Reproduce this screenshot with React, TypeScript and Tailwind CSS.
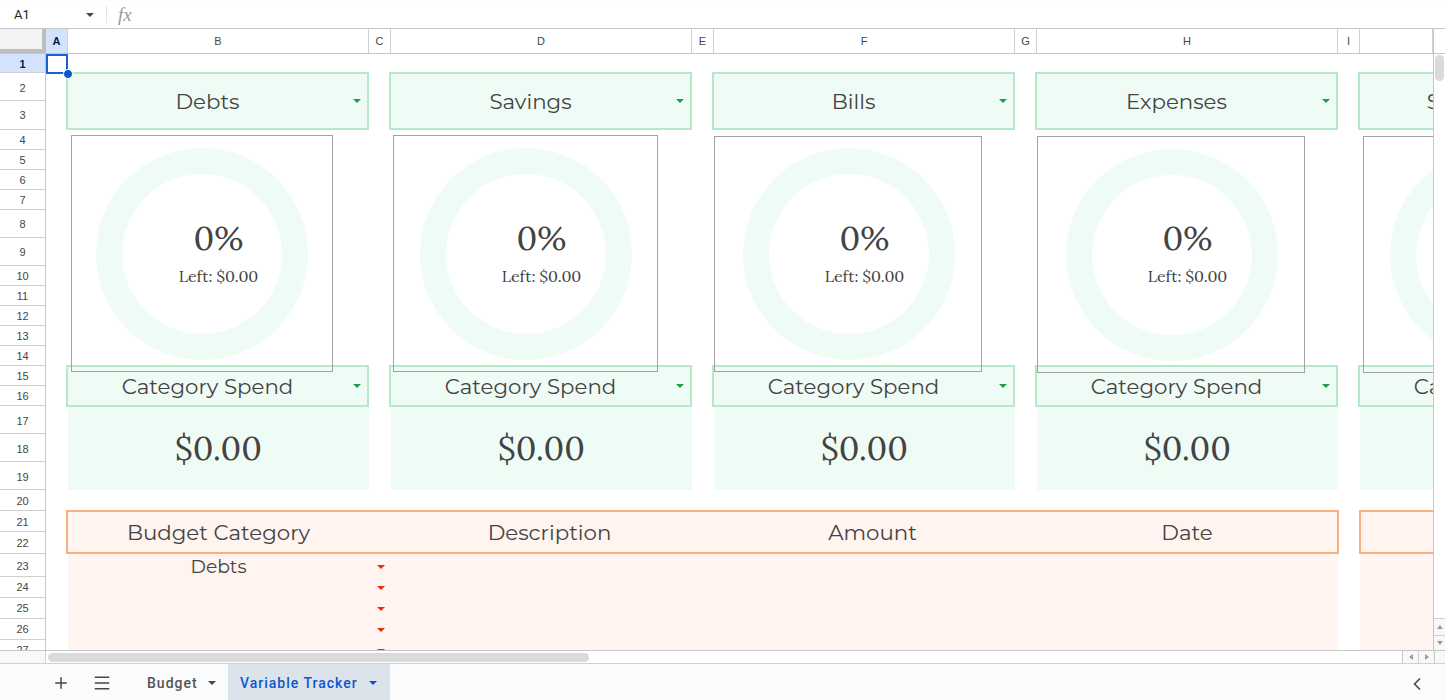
import { ChevronLeft, Menu, Plus } from 'lucide-react';

const COLUMNS: { label: string; width: string; active?: boolean }[] = [
  { label: 'A', width: 'w-[22px]', active: true },
  { label: 'B', width: 'w-[301px]' },
  { label: 'C', width: 'w-[22px]' },
  { label: 'D', width: 'w-[301px]' },
  { label: 'E', width: 'w-[22px]' },
  { label: 'F', width: 'w-[301px]' },
  { label: 'G', width: 'w-[22px]' },
  { label: 'H', width: 'w-[301px]' },
  { label: 'I', width: 'w-[22px]' },
  { label: '', width: 'w-[73px]' },
];

const ROWS: { n: number; height: string }[] = [
  { n: 1, height: 'h-[19px] pt-[2px]' },
  { n: 2, height: 'h-[28px] pt-[4px]' },
  { n: 3, height: 'h-[29px]' },
  { n: 4, height: 'h-[20px] pt-[2px]' },
  { n: 5, height: 'h-[20px] pt-[2px]' },
  { n: 6, height: 'h-[20px] pt-[2px]' },
  { n: 7, height: 'h-[20px] pt-[2px]' },
  { n: 8, height: 'h-[28px] pt-[2px]' },
  { n: 9, height: 'h-[28px] pt-[2px]' },
  { n: 10, height: 'h-[20px] pt-[2px]' },
  { n: 11, height: 'h-[20px] pt-[2px]' },
  { n: 12, height: 'h-[20px] pt-[2px]' },
  { n: 13, height: 'h-[20px] pt-[2px]' },
  { n: 14, height: 'h-[20px] pt-[2px]' },
  { n: 15, height: 'h-[20px] pt-[2px]' },
  { n: 16, height: 'h-[20px] pt-[2px]' },
  { n: 17, height: 'h-[28px] pt-[4px]' },
  { n: 18, height: 'h-[28px] pt-[4px]' },
  { n: 19, height: 'h-[28px] pt-[4px]' },
  { n: 20, height: 'h-[21px] pt-[2px]' },
  { n: 21, height: 'h-[21px] pt-[2px]' },
  { n: 22, height: 'h-[22px] pt-[2px]' },
  { n: 23, height: 'h-[23px] pt-[2px]' },
  { n: 24, height: 'h-[21px]' },
  { n: 25, height: 'h-[21px]' },
  { n: 26, height: 'h-[21px]' },
  { n: 27, height: 'h-[21px]' },
];

const CARDS: { title: string; chart: string; ring: string }[] = [
  { title: 'Debts', chart: 'left-[3px] top-[81px] w-[262px] h-[237px]', ring: 'left-[24px] top-[12px]' },
  { title: 'Savings', chart: 'left-[2px] top-[81px] w-[265px] h-[237px]', ring: 'left-[26px] top-[12px]' },
  { title: 'Bills', chart: 'left-0 top-[82px] w-[268px] h-[236px]', ring: 'left-[28px] top-[11px]' },
  { title: 'Expenses', chart: 'left-0 top-[82px] w-[268px] h-[237px]', ring: 'left-[28px] top-[12px]' },
  { title: 'Subscriptions', chart: 'left-[3px] top-[82px] w-[268px] h-[237px]', ring: 'left-[26px] top-[12px]' },
];

function Caret({ className }: { className: string }) {
  return (
    <svg width="8" height="4" viewBox="0 0 8 4" className={`shrink-0 ${className}`}>
      <path d="M0 0h8L4 4z" fill="currentColor" />
    </svg>
  );
}

function Card({ title, chart, ring }: { title: string; chart: string; ring: string }) {
  return (
    <div className="relative w-[301px] shrink-0 pt-[18px]">
      {/* Title dropdown */}
      <div className="-ml-[2px] flex h-[58px] w-[303px] items-center border-2 border-[#b7e9c9] bg-[#effbf5] pr-[6px]">
        <span className="flex-1 pr-[6px] pt-[2px] text-center font-['Montserrat','Inter',sans-serif] text-[21.33px] text-[#434343]">
          {title}
        </span>
        <Caret className="text-[#1e9e4a]" />
      </div>

      <div className="h-[235px]" />

      {/* Category dropdown */}
      <div className="-ml-[2px] flex h-[42px] w-[303px] items-center border-2 border-[#b7e9c9] bg-[#effbf5] pr-[6px]">
        <span className="flex-1 pr-[6px] pt-[1px] text-center font-['Montserrat','Inter',sans-serif] text-[21.33px] leading-none text-[#434343]">
          Category Spend
        </span>
        <Caret className="text-[#1e9e4a]" />
      </div>

      {/* Spend total */}
      <div className="flex h-[83px] items-center justify-center bg-[#effbf5] pb-[2px] font-['Lora','Liberation_Serif',serif] text-[33.33px] text-[#434343]">
        $0.00
      </div>

      {/* Floating chart */}
      <div className={`absolute ${chart} border border-[#a2a2a2]`}>
        <svg width="212" height="212" viewBox="0 0 212 212" className={`absolute ${ring}`}>
          <circle cx="106" cy="106" r="93" fill="none" stroke="#effbf5" strokeWidth="26" />
        </svg>
      </div>
      <div className="absolute left-0 top-[164px] flex w-[301px] flex-col items-center font-['Lora','Liberation_Serif',serif] text-[#434343]">
        <span className="h-[40px] text-[33.5px] leading-[40px]">0%</span>
        <span className="mt-[8px] text-[16px] leading-[20px]">Left: $0.00</span>
      </div>
    </div>
  );
}

function TableHeader() {
  const label = "font-['Montserrat','Inter',sans-serif] text-[21.33px] pt-[2px] text-[#434343] text-center";
  return (
    <div className="flex h-[44px] w-[1273px] shrink-0 items-center border-2 border-[#f6b07f] bg-[#fff4ef]">
      <span className={`${label} w-[323px] pr-[22px]`}>Budget Category</span>
      <span className={`${label} w-[323px] pr-[6px]`}>Description</span>
      <span className={`${label} w-[323px] pr-[6px]`}>Amount</span>
      <span className={`${label} w-[300px]`}>Date</span>
    </div>
  );
}

function TableRow({ text }: { text?: string }) {
  return (
    <div className="flex h-[21px] shrink-0 items-center">
      <span className="w-[301px] pt-[1px] text-center font-['Montserrat','Inter',sans-serif] text-[18.67px] leading-none text-[#434343]">
        {text}
      </span>
      <Caret className="ml-[8px] text-[#f0290f]" />
    </div>
  );
}

export default function App() {
  return (
    <div className="flex h-[700px] w-[1445px] flex-col overflow-hidden bg-white font-['Liberation_Sans',sans-serif]">
      {/* Formula bar */}
      <div className="flex h-[29px] shrink-0 items-center border-b border-[#c7c7c7] border-t border-t-[#f9fbfd] bg-white">
        <span className="w-[86px] pl-[14px] font-['Roboto',sans-serif] text-[13px] text-[#1f1f1f]">A1</span>
        <Caret className="text-[#444746]" />
        <div className="ml-[12px] h-[17px] w-px bg-[#e3e3e3]" />
        <span className="ml-[11px] font-['Liberation_Serif',serif] text-[19px] italic leading-none text-[#9a9a9a]">fx</span>
      </div>

      {/* Column headers */}
      <div className="flex h-[25px] shrink-0 border-b border-[#c7c7c7]">
        <div className="w-[46px] shrink-0 border-r-4 border-b-4 border-r-[#bdbdbd] border-b-[#bdbdbd] bg-[#f1f3f4]" />
        {COLUMNS.map((col) => (
          <div
            key={col.label}
            className={`${col.width} flex shrink-0 items-center justify-center border-r border-[#d0d0d0] text-[11px] ${
              col.active ? 'bg-[#d3e3fd] font-bold text-[#041e49]' : 'text-[#444746]'
            }`}
          >
            {col.label}
          </div>
        ))}
        <div className="flex-1 border-l border-[#c7c7c7]" />
      </div>

      <div className="flex min-h-0 flex-1">
        {/* Row headers */}
        <div className="w-[46px] shrink-0 overflow-hidden border-r border-[#c7c7c7]">
          {ROWS.map((row) => (
            <div
              key={row.n}
              className={`${row.height} flex items-center justify-center border-b border-[#d0d0d0] text-[11px] ${
                row.n === 1 ? 'bg-[#d3e3fd] font-bold text-[#041e49]' : 'text-[#444746]'
              }`}
            >
              {row.n}
            </div>
          ))}
        </div>

        {/* Sheet */}
        <div className="relative min-w-0 flex-1 overflow-hidden">
          <div className="flex gap-[22px] pl-[22px]">
            {CARDS.map((card, i) => (
              <Card key={i} title={card.title} chart={card.chart} ring={card.ring} />
            ))}
          </div>

          <div className="mt-[20px] flex gap-[20px] pl-[20px]">
            <TableHeader />
            <div className="h-[44px] w-[80px] shrink-0 border-2 border-[#f6b07f] bg-[#fff4ef]" />
          </div>

          <div className="flex gap-[22px] pl-[22px]">
            <div className="flex h-[120px] w-[1270px] shrink-0 flex-col bg-[#fff4ef] pt-[2px]">
              <TableRow text="Debts" />
              <TableRow />
              <TableRow />
              <TableRow />
              <TableRow />
            </div>
            <div className="h-[120px] w-[80px] shrink-0 bg-[#fff4ef]" />
          </div>

          {/* Selected cell */}
          <div className="absolute left-0 top-0 h-[20px] w-[22px] border-2 border-[#1a5fd6]" />
          <div className="absolute left-[17px] top-[15px] h-[10px] w-[10px] rounded-full border border-white bg-[#0b57d0]" />
        </div>

        {/* Vertical scrollbar */}
        <div className="flex w-[12px] shrink-0 flex-col border-l border-[#c7c7c7] bg-white">
          <div className="ml-[1px] mt-px h-[26px] w-[9px] rounded-full bg-[#dadada]" />
          <div className="flex-1" />
          <div className="flex h-[17px] items-center justify-center border-t border-[#d0d0d0] bg-[#f8f8f8]">
            <svg width="6" height="4" viewBox="0 0 6 4"><path d="M0 4h6L3 0z" fill="#9a9a9a" /></svg>
          </div>
          <div className="flex h-[15px] items-center justify-center border-t border-[#d0d0d0] bg-[#f8f8f8]">
            <svg width="6" height="4" viewBox="0 0 6 4"><path d="M0 0h6L3 4z" fill="#9a9a9a" /></svg>
          </div>
        </div>
      </div>

      {/* Horizontal scrollbar */}
      <div className="flex h-[13px] shrink-0 items-center border-t border-[#c7c7c7] bg-white">
        <div className="h-full w-[46px] shrink-0 border-r border-[#d0d0d0] bg-[#f8f8f8]" />
        <div className="ml-[2px] h-[9px] w-[541px] rounded-full bg-[#dadada]" />
        <div className="flex-1" />
        <div className="flex h-full w-[16px] items-center justify-center border-l border-[#c7c7c7] bg-[#f8f8f8]">
          <svg width="4" height="6" viewBox="0 0 4 6"><path d="M4 0v6L0 3z" fill="#9a9a9a" /></svg>
        </div>
        <div className="flex h-full w-[16px] items-center justify-center border-l border-[#d0d0d0] bg-[#f8f8f8]">
          <svg width="4" height="6" viewBox="0 0 4 6"><path d="M0 0v6L4 3z" fill="#9a9a9a" /></svg>
        </div>
        <div className="h-full w-[11px] border-l border-[#c7c7c7] bg-[#f8f8f8]" />
      </div>

      {/* Sheet tabs */}
      <div className="flex h-[37px] shrink-0 items-center border-t border-[#d0d0d0] bg-[#f9fbfd] font-['Roboto',sans-serif] text-[14px] font-medium tracking-[1px]">
        <Plus size={18} strokeWidth={2} className="ml-[52px] mt-px text-[#444746]" />
        <Menu size={20} strokeWidth={1.8} className="ml-[22px] mt-px text-[#444746]" />
        <span className="ml-[35px] w-[61px] pt-[2px] text-[#555555]">Budget</span>
        <Caret className="mt-px text-[#444746]" />
        <div className="ml-[12px] flex h-full w-[162px] items-center bg-[#dde3ea] pl-[12px] text-[#0b57d0]">
          <span className="w-[129px] pt-[2px]">Variable Tracker</span>
          <Caret className="mt-px text-[#0b57d0]" />
        </div>
        <div className="flex-1" />
        <ChevronLeft size={20} strokeWidth={2} className="mr-[18px] mt-[4px] text-[#444746]" />
      </div>
    </div>
  );
}
